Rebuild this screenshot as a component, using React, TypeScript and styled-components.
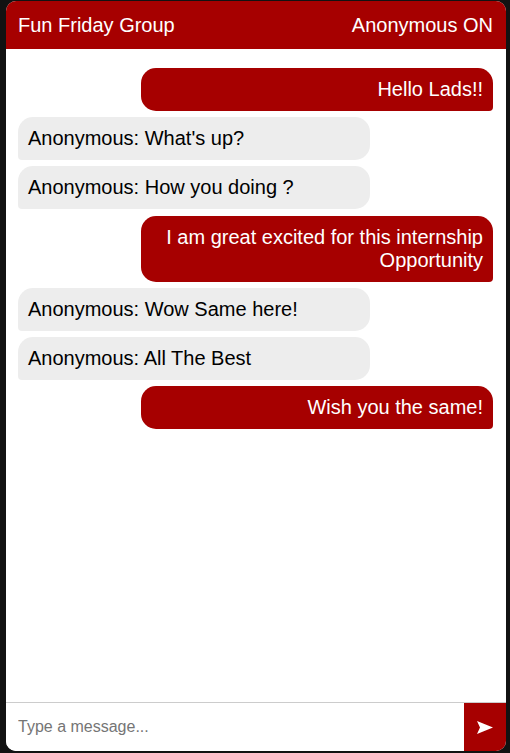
import React from "react";
import styled, { createGlobalStyle } from "styled-components";

const Global = createGlobalStyle`
  html, body { margin: 0; padding: 0; background: #121212; }
  body { font-family: "Liberation Sans", Arial, sans-serif; }
  * { box-sizing: border-box; }
`;

const RED = "#a60000";

const Page = styled.div`
  width: 510px;
  height: 753px;
  padding: 1px 4px 2px 6px;
  background: #121212;
`;

const Chat = styled.div`
  width: 500px;
  height: 750px;
  background: #fff;
  border-radius: 10px;
  overflow: hidden;
  display: flex;
  flex-direction: column;
`;

const Header = styled.header`
  height: 48px;
  flex: none;
  background: ${RED};
  color: #fff;
  display: flex;
  align-items: center;
  justify-content: space-between;
  padding: 0 13px 0 12px;
  font-size: 20px;
`;

const Messages = styled.div`
  flex: 1;
  display: flex;
  flex-direction: column;
  gap: 6.2px;
  padding: 19px 13px 0 12px;
`;

const Bubble = styled.div<{ $mine?: boolean }>`
  box-sizing: content-box;
  width: 332px;
  padding: 10px;
  font-size: 20px;
  line-height: 23px;
  align-self: ${(p) => (p.$mine ? "flex-end" : "flex-start")};
  text-align: ${(p) => (p.$mine ? "right" : "left")};
  background: ${(p) => (p.$mine ? RED : "#ededed")};
  color: ${(p) => (p.$mine ? "#fff" : "#000")};
  border-radius: ${(p) => (p.$mine ? "15px 15px 4px 15px" : "15px 15px 15px 4px")};
`;

const InputBar = styled.form`
  flex: none;
  height: 49px;
  border-top: 1px solid #cccccc;
  display: flex;
`;

const Input = styled.input`
  flex: 1;
  border: none;
  outline: none;
  padding: 0 12px;
  font-family: "Liberation Sans", Arial, sans-serif;
  font-size: 16px;
  color: #000;
  background: #fff;
  &::placeholder { color: #757575; }
`;

const SendButton = styled.button`
  width: 42px;
  border: none;
  background: ${RED};
  display: flex;
  align-items: center;
  justify-content: center;
  padding: 0;
  cursor: pointer;
`;

const messages: { mine: boolean; text: React.ReactNode }[] = [
  { mine: true, text: "Hello Lads!!" },
  { mine: false, text: "Anonymous: What's up?" },
  { mine: false, text: "Anonymous: How you doing ?" },
  { mine: true, text: "I am great excited for this internship Opportunity" },
  { mine: false, text: "Anonymous: Wow Same here!" },
  { mine: false, text: "Anonymous: All The Best" },
  { mine: true, text: "Wish you the same!" },
];

export default function App() {
  return (
    <Page>
      <Global />
      <Chat>
        <Header>
          <span>Fun Friday Group</span>
          <span>Anonymous ON</span>
        </Header>
        <Messages>
          {messages.map((m, i) => (
            <Bubble key={i} $mine={m.mine}>
              {m.text}
            </Bubble>
          ))}
        </Messages>
        <InputBar onSubmit={(e) => e.preventDefault()}>
          <Input placeholder="Type a message..." />
          <SendButton type="submit" aria-label="Send">
            <svg width="16" height="13" viewBox="0 0 16 13">
              <polygon points="0,0 16,6.5 0,13 3,6.5" fill="#fff" />
            </svg>
          </SendButton>
        </InputBar>
      </Chat>
    </Page>
  );
}
